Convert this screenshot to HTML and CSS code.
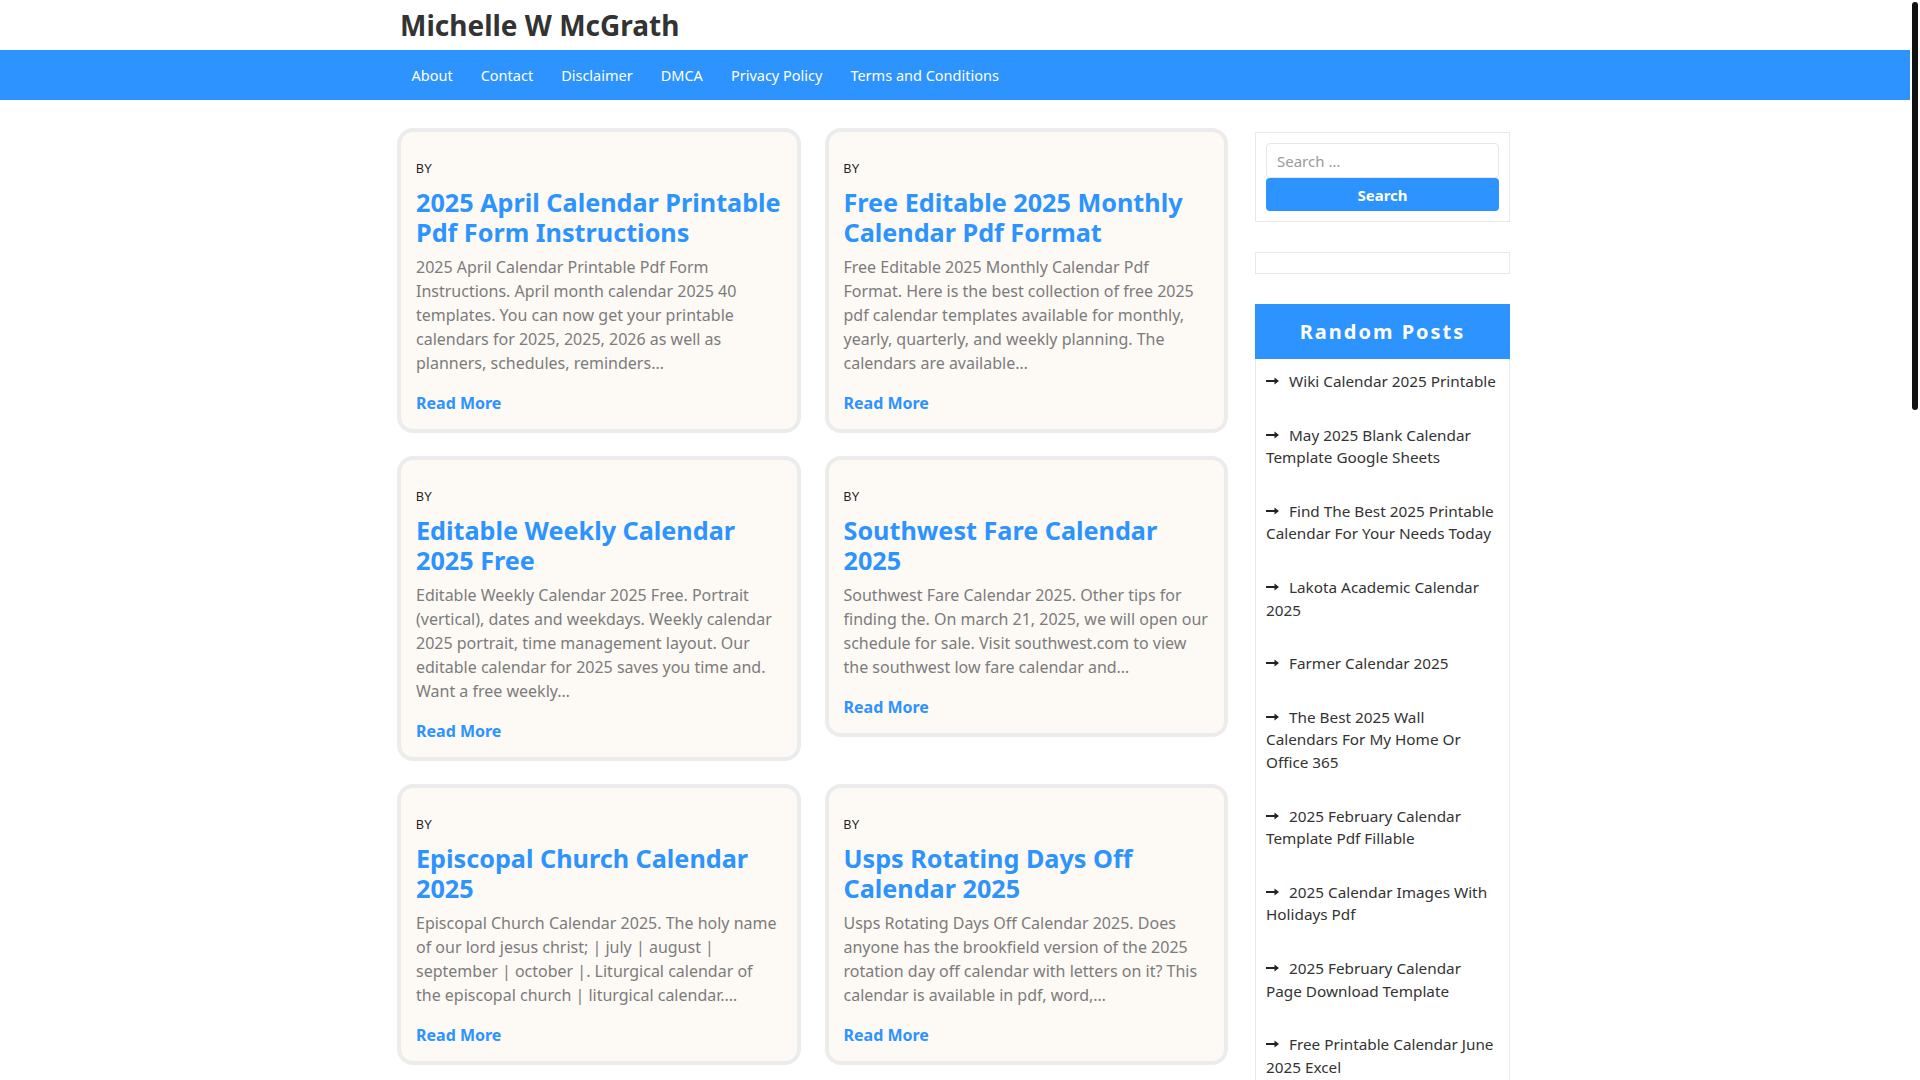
FILE: index.html
```html
<!DOCTYPE html>
<html lang="en">
<head>
<meta charset="utf-8">
<title>Michelle W McGrath</title>
<link rel="stylesheet" href="styles.css">
</head>
<body>
<div class="site">
  <header class="site-header">
    <div class="container">
      <h1 class="site-title">Michelle W McGrath</h1>
    </div>
  </header>
  <nav class="main-nav">
    <div class="container">
      <ul class="menu">
        <li><a href="#">About</a></li>
        <li><a href="#">Contact</a></li>
        <li><a href="#">Disclaimer</a></li>
        <li><a href="#">DMCA</a></li>
        <li><a href="#">Privacy Policy</a></li>
        <li><a href="#">Terms and Conditions</a></li>
      </ul>
    </div>
  </nav>

  <div class="container content">
    <main class="posts">
      <article class="card">
        <div class="byline">BY</div>
        <h2 class="card-title"><a href="#">2025 April Calendar Printable Pdf Form Instructions</a></h2>
        <p class="excerpt">2025 April Calendar Printable Pdf Form Instructions. April month calendar 2025 40 templates. You can now get your printable calendars for 2025, 2025, 2026 as well as planners, schedules, reminders…</p>
        <a class="read-more" href="#">Read More</a>
      </article>
      <article class="card">
        <div class="byline">BY</div>
        <h2 class="card-title"><a href="#">Free Editable 2025 Monthly Calendar Pdf Format</a></h2>
        <p class="excerpt">Free Editable 2025 Monthly Calendar Pdf Format. Here is the best collection of free 2025 pdf calendar templates available for monthly, yearly, quarterly, and weekly planning. The calendars are available…</p>
        <a class="read-more" href="#">Read More</a>
      </article>
      <article class="card">
        <div class="byline">BY</div>
        <h2 class="card-title"><a href="#">Editable Weekly Calendar 2025 Free</a></h2>
        <p class="excerpt">Editable Weekly Calendar 2025 Free. Portrait (vertical), dates and weekdays. Weekly calendar 2025 portrait, time management layout. Our editable calendar for 2025 saves you time and. Want a free weekly…</p>
        <a class="read-more" href="#">Read More</a>
      </article>
      <article class="card">
        <div class="byline">BY</div>
        <h2 class="card-title"><a href="#">Southwest Fare Calendar 2025</a></h2>
        <p class="excerpt">Southwest Fare Calendar 2025. Other tips for finding the. On march 21, 2025, we will open our schedule for sale. Visit southwest.com to view the southwest low fare calendar and…</p>
        <a class="read-more" href="#">Read More</a>
      </article>
      <article class="card">
        <div class="byline">BY</div>
        <h2 class="card-title"><a href="#">Episcopal Church Calendar 2025</a></h2>
        <p class="excerpt">Episcopal Church Calendar 2025. The holy name of our lord jesus christ; | july | august | september | october |. Liturgical calendar of the&nbsp;episcopal church | liturgical calendar.…</p>
        <a class="read-more" href="#">Read More</a>
      </article>
      <article class="card">
        <div class="byline">BY</div>
        <h2 class="card-title"><a href="#">Usps Rotating Days Off Calendar 2025</a></h2>
        <p class="excerpt">Usps Rotating Days Off Calendar 2025. Does anyone has the brookfield version of the 2025 rotation day off calendar with letters on it? This calendar is available in pdf, word,…</p>
        <a class="read-more" href="#">Read More</a>
      </article>
    </main>

    <aside class="sidebar">
      <section class="widget search-widget">
        <form class="search-form">
          <input class="search-field" type="search" placeholder="Search …">
          <button class="search-submit" type="button">Search</button>
        </form>
      </section>
      <section class="widget empty-widget"></section>
      <section class="widget random-widget">
        <h3 class="widget-title">Random Posts</h3>
        <ul class="random-list">
          <li><svg class="arrow" viewBox="0 0 13 8"><path d="M0 3h8.5V0.5L13 4 8.5 7.5V5H0z"/></svg>Wiki Calendar 2025 Printable</li>
          <li><svg class="arrow" viewBox="0 0 13 8"><path d="M0 3h8.5V0.5L13 4 8.5 7.5V5H0z"/></svg>May 2025 Blank Calendar Template Google Sheets</li>
          <li><svg class="arrow" viewBox="0 0 13 8"><path d="M0 3h8.5V0.5L13 4 8.5 7.5V5H0z"/></svg>Find The Best 2025 Printable Calendar For Your Needs Today</li>
          <li><svg class="arrow" viewBox="0 0 13 8"><path d="M0 3h8.5V0.5L13 4 8.5 7.5V5H0z"/></svg>Lakota Academic Calendar 2025</li>
          <li><svg class="arrow" viewBox="0 0 13 8"><path d="M0 3h8.5V0.5L13 4 8.5 7.5V5H0z"/></svg>Farmer Calendar 2025</li>
          <li><svg class="arrow" viewBox="0 0 13 8"><path d="M0 3h8.5V0.5L13 4 8.5 7.5V5H0z"/></svg>The Best 2025 Wall Calendars For My Home Or Office 365</li>
          <li><svg class="arrow" viewBox="0 0 13 8"><path d="M0 3h8.5V0.5L13 4 8.5 7.5V5H0z"/></svg>2025 February Calendar Template Pdf Fillable</li>
          <li><svg class="arrow" viewBox="0 0 13 8"><path d="M0 3h8.5V0.5L13 4 8.5 7.5V5H0z"/></svg>2025 Calendar Images With Holidays Pdf</li>
          <li><svg class="arrow" viewBox="0 0 13 8"><path d="M0 3h8.5V0.5L13 4 8.5 7.5V5H0z"/></svg>2025 February Calendar Page Download Template</li>
          <li><svg class="arrow" viewBox="0 0 13 8"><path d="M0 3h8.5V0.5L13 4 8.5 7.5V5H0z"/></svg>Free Printable Calendar June 2025 Excel</li>
        </ul>
      </section>
    </aside>
  </div>
</div>
<div class="scrollbar" aria-hidden="true"><div class="scrollbar-thumb"></div></div>
</body>
</html>
```

FILE: styles.css
```css
* { box-sizing: border-box; }

html, body {
  margin: 0;
  padding: 0;
  background: #fff;
}

body {
  font-family: "Noto Sans", "Open Sans", sans-serif;
  color: #333;
}

.site {
  width: calc(100% - 10px);
}

/* page scrollbar as shown in the screenshot */
.scrollbar {
  position: fixed;
  top: 0;
  right: 0;
  width: 10px;
  height: 100vh;
  background: #fff;
}

.scrollbar-thumb {
  position: absolute;
  top: 2px;
  left: 2px;
  width: 6px;
  height: 408px;
  border-radius: 3px;
  background: #111;
}

.container {
  width: 1110px;
  margin: 0 auto;
}

.site-header {
  height: 50px;
  display: flex;
  align-items: center;
}

.site-title {
  margin: 0;
  font-size: 28px;
  font-weight: 700;
  line-height: 1;
  color: #333;
}

.main-nav {
  background: #2c93ff;
  height: 50px;
}

.menu {
  list-style: none;
  margin: 0;
  padding: 0;
  display: flex;
  height: 50px;
  align-items: center;
  gap: 5px;
}

.menu a {
  display: block;
  color: #fff;
  text-decoration: none;
  font-size: 14.5px;
  font-weight: 400;
  padding: 0 11.5px;
  line-height: 50px;
}

.content {
  display: grid;
  grid-template-columns: 828px 255px;
  column-gap: 27px;
  align-items: start;
  padding-top: 28px;
}

.posts {
  margin-left: -3px;
  display: grid;
  grid-template-columns: 1fr 1fr;
  column-gap: 24px;
  row-gap: 23px;
  align-items: start;
}

.card {
  background: #fdf9f4;
  border: 4px solid #ececec;
  border-radius: 16px;
  padding: 27.5px 14px 14px 15px;
}

.byline {
  font-family: "Liberation Sans", Arial, sans-serif;
  font-size: 12px;
  line-height: 18px;
  color: #222;
}

.card-title {
  margin: 9px 0 8px;
  font-size: 25.2px;
  line-height: 30px;
  font-weight: 700;
}

.card-title a {
  color: #2c93ff;
  text-decoration: none;
}

.excerpt {
  margin: 0 0 16.5px;
  font-size: 16px;
  line-height: 24px;
  color: #7c7c7c;
}

.read-more {
  display: inline-block;
  font-size: 16px;
  line-height: 24px;
  font-weight: 700;
  color: #2c93ff;
  text-decoration: none;
}

.sidebar {
  padding-top: 4px;
}

.widget {
  border: 1px solid #e8e8ef;
  background: #fff;
  margin-bottom: 30px;
}

.search-widget {
  padding: 10px;
}

.empty-widget {
  height: 22px;
}

.search-form {
  display: flex;
  flex-direction: column;
}

.search-field {
  height: 35px;
  border: 1px solid #e6e6ea;
  border-radius: 4px;
  padding: 0 10px;
  font-family: "Noto Sans", sans-serif;
  font-size: 15px;
  color: #333;
  outline: none;
}

.search-field::placeholder {
  color: #9a9a9a;
}

.search-submit {
  height: 33px;
  border: none;
  border-radius: 4px;
  background: #2c93ff;
  color: #fff;
  font-family: "Noto Sans", sans-serif;
  font-size: 15px;
  font-weight: 700;
  padding: 0;
}

.random-widget {
  border-top: 0;
}

.widget-title {
  margin: 0 -1px;
  background: #2c93ff;
  color: #fff;
  height: 55px;
  line-height: 55px;
  text-align: center;
  font-size: 20px;
  font-weight: 700;
  letter-spacing: 2px;
}

.random-list {
  list-style: none;
  margin: 0;
  padding: 11px 12px 0 10px;
}

.random-list li {
  font-size: 15.3px;
  line-height: 22.6px;
  color: #333;
  margin-bottom: 31px;
}

.arrow {
  width: 13px;
  height: 8px;
  fill: #222;
  margin-right: 10px;
  vertical-align: 2px;
}
```
